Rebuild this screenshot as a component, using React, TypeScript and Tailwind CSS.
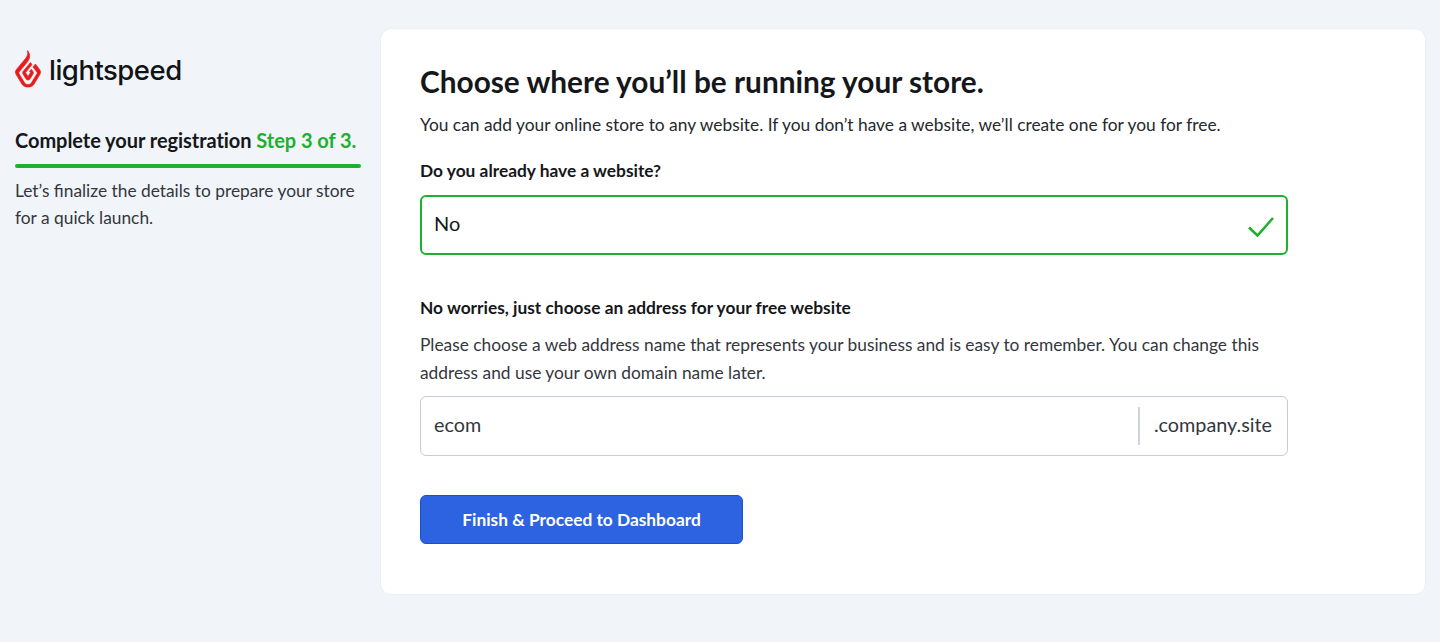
function Logo() {
  return (
    <div className="flex h-[38px] items-center">
      <svg width="26" height="38" viewBox="0 0 26 38" fill="#e81c1c" stroke="#e81c1c" strokeWidth="0.7" aria-hidden="true">
        <path d="M12.5 0.5 C13.5 5 11.5 7.5 8.5 11 L1.4 19.5 C0.2 21 0.2 23 1.2 24.6 L7 34.2 C9.4 38 16.6 38 19 34.2 L24.8 24.6 C25.8 23 25.7 21 24.6 19.5 L20.4 14 L18 17 L21.9 22 C22.3 22.6 22.3 23.2 22 23.7 L16.3 33 C14.9 35 11.1 35 9.7 33 L4 23.7 C3.7 23.2 3.7 22.6 4.1 22 L11.5 13 C15 8.8 16 5 12.5 0.5 Z" />
        <path d="M15.5 12.5 L8.2 21.3 C7.5 22.2 7.5 23.1 8 24 L11 28.9 C12 30.4 14 30.4 15 28.9 L18 24 C18.6 23.1 18.5 22.2 17.9 21.4 L16.3 19.3 L14.6 21.4 L15.5 22.6 L13 26.6 L10.5 22.6 L17 14.6 Z" />
      </svg>
      <span className="mt-[1px] ml-[8px] font-['Inter',sans-serif] text-[27.5px] leading-[38px] font-medium tracking-[-0.5px] text-[#111316]">
        lightspeed
      </span>
    </div>
  );
}

export default function App() {
  return (
    <div className="flex h-[642px] w-[1440px] overflow-hidden bg-[#f1f4f8] font-['Lato',sans-serif] text-[#15171a]">
      <aside className="ml-[15px] w-[346px] shrink-0 pt-[50px]">
        <Logo />
        <h2 className="mt-[38px] text-[20px] leading-[28px] font-bold tracking-[-0.05px] whitespace-nowrap">
          Complete your registration <span className="text-[#1eb02f]">Step 3 of 3.</span>
        </h2>
        <div className="mt-[10px] h-[4px] rounded-full bg-[#1eb02f]" />
        <p className="mt-[9px] text-[17.33px] leading-[27px] text-[#33373d]">
          Let’s finalize the details to prepare your store for a quick launch.
        </p>
      </aside>

      <main className="mt-[29px] ml-[20px] h-[565px] w-[1044px] rounded-[10px] bg-white pt-[34px] pl-[39px] shadow-[0_0_2px_rgba(20,30,50,0.08)]">
        <h1 className="text-[29.8px] leading-[38px] font-bold">Choose where you’ll be running your store.</h1>
        <p className="mt-[12px] text-[17.35px] leading-[24px] text-[#25282d]">
          You can add your online store to any website. If you don’t have a website, we’ll create one for you for free.
        </p>

        <div className="mt-[22px] w-[868px]">
          <label className="block text-[17.33px] leading-[24px] font-bold">Do you already have a website?</label>
          <div className="mt-[12px] flex h-[60px] items-center justify-between rounded-[6px] border-2 border-[#1eb02f] px-[12px] text-[20px]">
            <span className="mb-[4px]">No</span>
            <svg width="26" height="20" viewBox="0 0 26 20" fill="none" className="mt-[3px]" aria-hidden="true">
              <path d="M1 10.5 L9.5 18.5 L25 1" stroke="#1eb02f" strokeWidth="2.6" />
            </svg>
          </div>

          <h3 className="mt-[41px] text-[17.33px] leading-[24px] font-bold">
            No worries, just choose an address for your free website
          </h3>
          <p className="mt-[11px] text-[17.33px] leading-[28px] text-[#33373d]">
            Please choose a web address name that represents your business and is easy to remember. You can change this
            address and use your own domain name later.
          </p>
          <div className="mt-[9px] flex h-[60px] items-center rounded-[6px] border border-[#c5ccd5] pr-[15px] pl-[13px] text-[19.8px] text-[#33373d]">
            <span className="mb-[3px] flex-1">ecom</span>
            <span className="mr-[14px] h-[38px] w-[1.5px] bg-[#cfd5dc]" />
            <span className="mb-[3px]">.company.site</span>
          </div>

          <button className="mt-[39px] flex h-[49px] w-[323px] items-center justify-center rounded-[6px] border border-[#1a4fd6] bg-[#2d62e0] text-[17.33px] font-bold text-white">
            Finish &amp; Proceed to Dashboard
          </button>
        </div>
      </main>
    </div>
  );
}
